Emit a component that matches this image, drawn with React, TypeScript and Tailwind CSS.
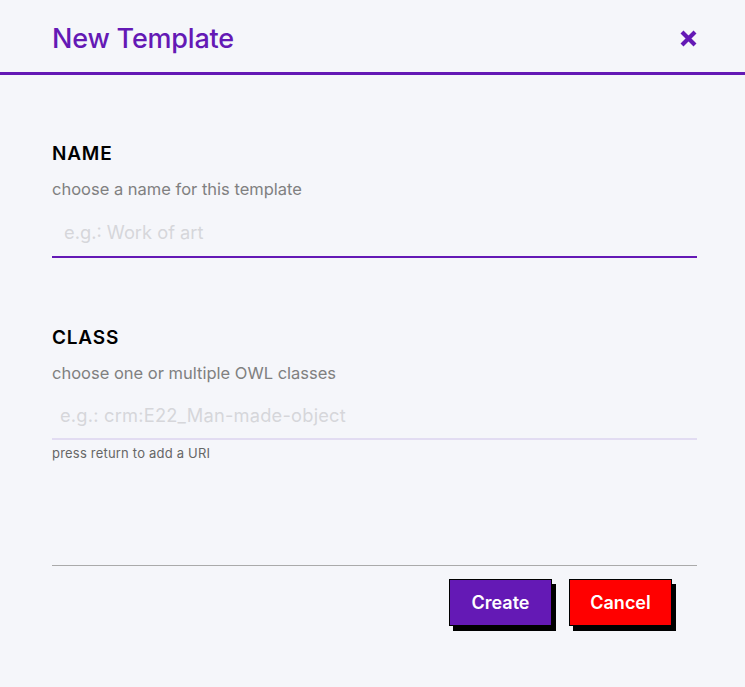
import React from "react";

export default function App() {
  const font = { fontFamily: 'Inter, "Noto Sans", sans-serif' };
  return (
    <div className="w-[745px] h-[687px] bg-[#f5f6fa] overflow-hidden" style={font}>
      <div className="h-[75px] flex items-center justify-between pl-[52px] pr-[47px] border-b-[3px] border-[#6419b5]">
        <h1 className="text-[27px] font-medium text-[#6419b5] tracking-[-0.2px] mt-[6px]">New Template</h1>
        <svg width="19" height="19" viewBox="0 0 19 19" className="mt-[5px]">
          <path d="M3 3 L16 16 M16 3 L3 16" stroke="#6419b5" strokeWidth="4.2" strokeLinecap="butt" />
        </svg>
      </div>
      <div className="px-[52px] pr-[48px]">
        <div className="pt-[66px]">
          <div className="text-[19px] font-semibold text-black tracking-[0.8px] leading-[26px]">NAME</div>
          <div className="text-[16.5px] text-[#808080] mt-[11px] leading-[22px]">choose a name for this template</div>
          <div className="mt-[10px] border-b-2 border-[#6419b5] h-[48px] flex items-center pl-[12px]">
            <span className="text-[18.3px] text-[#d6d6da]">e.g.: Work of art</span>
          </div>
        </div>
        <div className="pt-[67px]">
          <div className="text-[19px] font-semibold text-black tracking-[0.8px] leading-[26px]">CLASS</div>
          <div className="text-[16.5px] text-[#808080] mt-[11px] leading-[22px]">choose one or multiple OWL classes</div>
          <div className="mt-[10px] border-b-2 border-[#e2dcf2] h-[46px] flex items-center pl-[8px]">
            <span className="text-[18.3px] text-[#d6d6da] tracking-[0.2px]">e.g.: crm:E22_Man-made-object</span>
          </div>
          <div className="text-[13px] text-[#666] mt-[5px] leading-[16px] tracking-[0.2px]">press return to add a URI</div>
        </div>
        <div className="mt-[104px] border-t border-[#aaaaaa]" />
        <div className="flex justify-end gap-[17px] pt-[13px] pr-[25px]">
          <button className="w-[103px] h-[47px] bg-[#6419b5] border border-black shadow-[4px_5px_0_0_#000] text-white text-[18px] font-semibold">Create</button>
          <button className="w-[103px] h-[47px] bg-[#ff0000] border border-black shadow-[4px_5px_0_0_#000] text-white text-[18px] font-semibold">Cancel</button>
        </div>
      </div>
    </div>
  );
}
